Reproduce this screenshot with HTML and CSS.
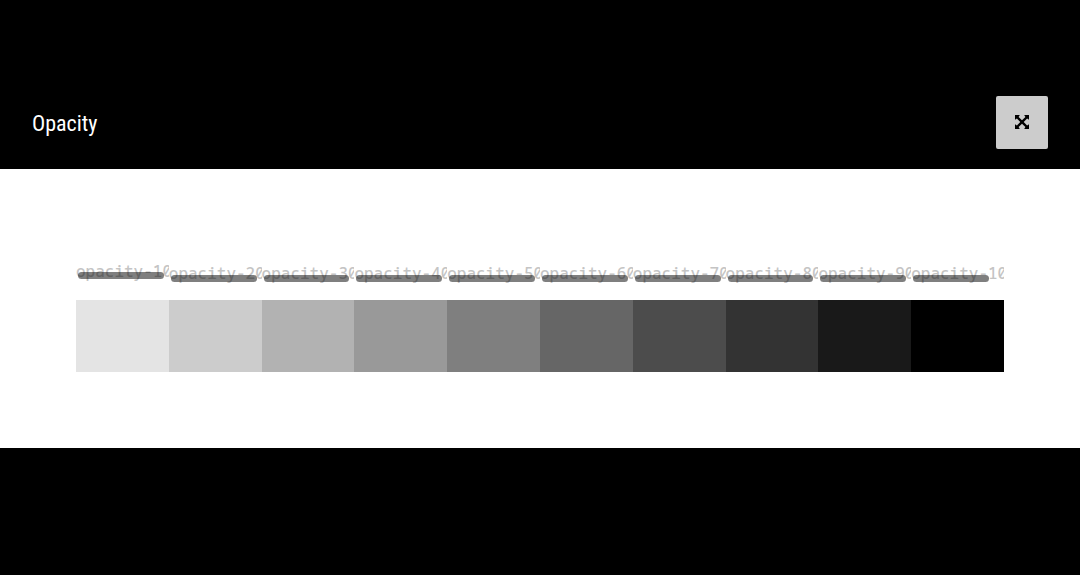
FILE: index.html
```html
<!DOCTYPE html>
<html lang="en">
<head>
<meta charset="utf-8">
<meta name="viewport" content="width=device-width, initial-scale=1">
<title>Opacity</title>
<link rel="stylesheet" href="styles.css">
</head>
<body>
<header class="header">
  <h1 class="title">Opacity</h1>
  <button class="expand" type="button" aria-label="Expand">
    <svg class="icon" viewBox="0 0 14 14" aria-hidden="true">
      <path d="M0 0h4.800L3.600 1.900 7 5.300l3.400-3.400L9.200 0H14v4.800L12.100 3.600 8.700 7l3.400 3.400L14 9.200V14H9.200l1.200-1.900L7 8.700l-3.400 3.400L4.800 14H0V9.200l1.900 1.200L5.300 7 1.900 3.600 0 4.800z"/>
    </svg>
  </button>
</header>
<main class="stage">
  <div class="scale">
    <div class="step"><div class="label label-first"><code>opacity-10</code></div><div class="swatch o10"></div></div>
    <div class="step"><div class="label"><code>opacity-20</code></div><div class="swatch o20"></div></div>
    <div class="step"><div class="label"><code>opacity-30</code></div><div class="swatch o30"></div></div>
    <div class="step"><div class="label"><code>opacity-40</code></div><div class="swatch o40"></div></div>
    <div class="step"><div class="label"><code>opacity-50</code></div><div class="swatch o50"></div></div>
    <div class="step"><div class="label"><code>opacity-60</code></div><div class="swatch o60"></div></div>
    <div class="step"><div class="label"><code>opacity-70</code></div><div class="swatch o70"></div></div>
    <div class="step"><div class="label"><code>opacity-80</code></div><div class="swatch o80"></div></div>
    <div class="step"><div class="label"><code>opacity-90</code></div><div class="swatch o90"></div></div>
    <div class="step"><div class="label label-last"><code>opacity-100</code></div><div class="swatch o100"></div></div>
  </div>
</main>
</body>
</html>
```
FILE: styles.css
```css
* { box-sizing: border-box; }
body {
  margin: 0;
  background: #000;
}
.header {
  display: flex;
  align-items: center;
  justify-content: space-between;
  padding: 96px 32px 20px;
}
.title {
  margin: 0;
  padding-top: 2px;
  color: #fff;
  font: 400 22px/32px "Roboto Condensed", "Liberation Sans Narrow", "Open Sans Condensed", sans-serif;
}
.expand {
  display: grid;
  place-items: center;
  width: 52px;
  height: 53px;
  padding: 0 0 2px;
  border: 0;
  border-radius: 2px;
  background: #ccc;
}
.icon {
  width: 14px;
  height: 14px;
  fill: #000;
}
.stage {
  padding: 92px 76px 76px;
  background: #fff;
}
.scale {
  display: grid;
  grid-template-columns: repeat(10, minmax(0, 1fr));
}
.step {
  display: flex;
  flex-direction: column;
}
.label {
  position: relative;
  height: 23px;
  margin-bottom: 16px;
  padding-top: 2px;
  overflow: hidden;
  white-space: nowrap;
  color: #c4c4c4;
}
.label code {
  display: block;
  font: 500 16px/21px "Noto Sans Mono", "Roboto Mono", "DejaVu Sans Mono", "Liberation Mono", monospace;
}
/* Overlay scrollbar thumb */
.label::after {
  content: "";
  position: absolute;
  left: 2px;
  right: 5px;
  bottom: 2px;
  height: 7px;
  border-radius: 4px;
  background: rgba(0, 0, 0, 0.5);
}
.label-first {
  height: 20px;
  margin-bottom: 19px;
  padding-top: 0;
}
.label-last::after { right: 15px; }
.swatch {
  height: 72px;
  background: #000;
}
.o10 { opacity: 0.106; }
.o20 { opacity: 0.2; }
.o30 { opacity: 0.3; }
.o40 { opacity: 0.4; }
.o50 { opacity: 0.5; }
.o60 { opacity: 0.6; }
.o70 { opacity: 0.7; }
.o80 { opacity: 0.8; }
.o90 { opacity: 0.9; }
.o100 { opacity: 1; }
```
